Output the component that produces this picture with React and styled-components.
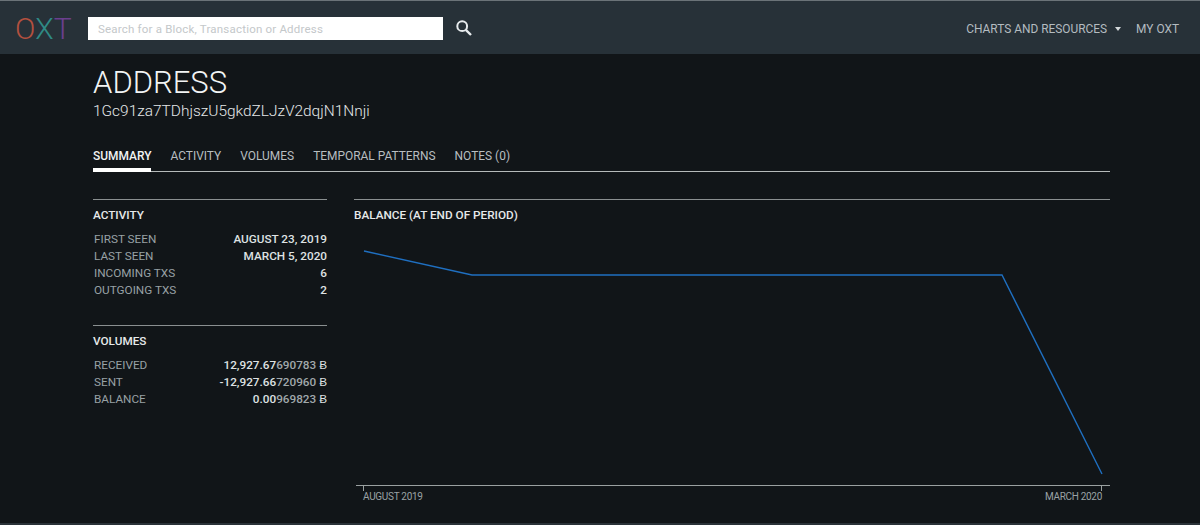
import React from "react";
import styled, { createGlobalStyle } from "styled-components";

const GlobalStyle = createGlobalStyle`
  html, body {
    margin: 0;
    padding: 0;
    background: #111518;
    font-family: Roboto, "Liberation Sans", sans-serif;
    overflow: hidden;
  }
`;

const Page = styled.div`
  width: 1200px;
  height: 525px;
  display: flex;
  flex-direction: column;
  box-sizing: border-box;
  border-bottom: 2px solid #2a3238;
`;

const TopBar = styled.header`
  height: 54px;
  box-sizing: border-box;
  border-top: 1px solid #6b7378;
  background: #273138;
  display: flex;
  align-items: center;
  padding: 2px 21px 0 15px;
  flex-shrink: 0;
`;

const Logo = styled.div`
  font-size: 30px;
  font-weight: 300;
  width: 73px;
  display: flex;
`;

const LogoLetter = styled.span`
  color: ${(p) => p.$color};
`;

const SearchInput = styled.div`
  width: 355px;
  height: 23px;
  background: #fff;
  color: #c4c8ca;
  font-size: 11.5px;
  letter-spacing: 0.2px;
  line-height: 24px;
  padding-left: 10px;
  box-sizing: border-box;
`;

const SearchButton = styled.svg`
  margin: -2px 0 0 13px;
  color: #e8ecee;
`;

const TopNav = styled.nav`
  margin-left: auto;
  display: flex;
  align-items: center;
  color: #b4bcc0;
  font-size: 11.9px;
`;

const Caret = styled.span`
  width: 0;
  height: 0;
  border-left: 3.5px solid transparent;
  border-right: 3.5px solid transparent;
  border-top: 4px solid #d4d8da;
  margin: 1px 15px 0 8px;
`;

const Content = styled.main`
  flex: 1;
  padding: 11px 90px 0 93px;
  display: flex;
  flex-direction: column;
`;

const Title = styled.h1`
  margin: 0;
  font-size: 31px;
  font-weight: 300;
  line-height: 35px;
  color: #f2f4f4;
`;

const Address = styled.div`
  font-size: 15.45px;
  font-weight: 300;
  line-height: 20px;
  margin-top: 1px;
  color: #e4e7e8;
`;

const Tabs = styled.div`
  display: flex;
  gap: 19px;
  margin-top: 23px;
  border-bottom: 1px solid #b6baba;
  height: 27px;
`;

const Tab = styled.div`
  font-size: 11.95px;
  font-weight: ${(p) => (p.$active ? 500 : 400)};
  color: ${(p) => (p.$active ? "#f0f2f2" : "#b8bec0")};
  line-height: 16px;
  height: 28px;
  box-sizing: border-box;
  padding-top: 4px;
  border-bottom: ${(p) => (p.$active ? "4px solid #fff" : "none")};
`;

const Columns = styled.div`
  display: flex;
  gap: 27px;
  margin-top: 27px;
  flex: 1;
`;

const Sidebar = styled.aside`
  width: 234px;
  flex-shrink: 0;
`;

const Section = styled.section`
  border-top: 1px solid #8a8f90;
  padding-top: 8px;
  height: 126px;
  box-sizing: border-box;
`;

const SectionTitle = styled.h3`
  margin: 0 0 9px;
  font-size: 11.75px;
  line-height: 14px;
  font-weight: 500;
  color: #e6e9ea;
`;

const Row = styled.div`
  display: flex;
  justify-content: space-between;
  font-size: 11.75px;
  line-height: 17px;
  padding-left: 1px;
`;

const Label = styled.span`
  color: #98a1a5;
`;

const Value = styled.span`
  color: #dfe2e3;
  font-weight: 500;
`;

const Faded = styled.span`
  color: #a0a8ab;
`;

const ChartPanel = styled.div`
  flex: 1;
  border-top: 1px solid #8a8f90;
  padding-top: 8px;
  position: relative;
`;

const ChartSvg = styled.svg`
  position: absolute;
  left: 0;
  top: 0;
`;

const AxisLabel = styled.text`
  font-size: 10px;
  fill: #9aa2a5;
  font-family: Roboto, "Liberation Sans", sans-serif;
  letter-spacing: -0.3px;
`;

const Volume = ({ whole, faded }) => (
  <Value>
    {whole}
    <Faded>{faded}</Faded> Ƀ
  </Value>
);

export default function App() {
  return (
    <Page>
      <GlobalStyle />
      <TopBar>
        <Logo>
          <LogoLetter $color="#b3503f">O</LogoLetter>
          <LogoLetter $color="#2f8b86">X</LogoLetter>
          <LogoLetter $color="#6b3f8f">T</LogoLetter>
        </Logo>
        <SearchInput>Search for a Block, Transaction or Address</SearchInput>
        <SearchButton width="16" height="16" viewBox="0 0 16 16" fill="none" stroke="currentColor">
          <circle cx="6.2" cy="6.2" r="4.9" strokeWidth="2" />
          <path d="M9.8 9.8L15 15" strokeWidth="2.4" />
        </SearchButton>
        <TopNav>
          CHARTS AND RESOURCES
          <Caret />
          MY OXT
        </TopNav>
      </TopBar>
      <Content>
        <Title>ADDRESS</Title>
        <Address>1Gc91za7TDhjszU5gkdZLJzV2dqjN1Nnji</Address>
        <Tabs>
          <Tab $active>SUMMARY</Tab>
          <Tab>ACTIVITY</Tab>
          <Tab>VOLUMES</Tab>
          <Tab>TEMPORAL PATTERNS</Tab>
          <Tab>NOTES (0)</Tab>
        </Tabs>
        <Columns>
          <Sidebar>
            <Section>
              <SectionTitle>ACTIVITY</SectionTitle>
              <Row><Label>FIRST SEEN</Label><Value>AUGUST 23, 2019</Value></Row>
              <Row><Label>LAST SEEN</Label><Value>MARCH 5, 2020</Value></Row>
              <Row><Label>INCOMING TXS</Label><Value>6</Value></Row>
              <Row><Label>OUTGOING TXS</Label><Value>2</Value></Row>
            </Section>
            <Section>
              <SectionTitle>VOLUMES</SectionTitle>
              <Row><Label>RECEIVED</Label><Volume whole="12,927.67" faded="690783" /></Row>
              <Row><Label>SENT</Label><Volume whole="-12,927.66" faded="720960" /></Row>
              <Row><Label>BALANCE</Label><Volume whole="0.00" faded="969823" /></Row>
            </Section>
          </Sidebar>
          <ChartPanel>
            <SectionTitle>BALANCE (AT END OF PERIOD)</SectionTitle>
            <ChartSvg width="756" height="310" viewBox="0 0 756 310">
              <polyline
                points="10,51 118,75 648,75 748,274"
                fill="none"
                stroke="#1f6fc0"
                strokeWidth="1.4"
              />
              <path d="M2 285.5H756M9.5 285V291M747.5 285V291" stroke="#9aa0a0" strokeWidth="1" fill="none" />
              <AxisLabel x="9" y="300">AUGUST 2019</AxisLabel>
              <AxisLabel x="748" y="300" textAnchor="end">MARCH 2020</AxisLabel>
            </ChartSvg>
          </ChartPanel>
        </Columns>
      </Content>
    </Page>
  );
}
